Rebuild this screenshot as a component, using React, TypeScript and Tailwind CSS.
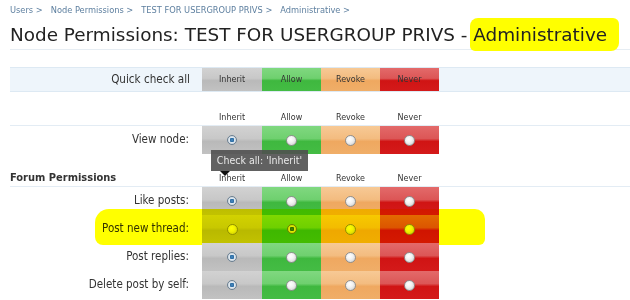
import React from "react";

type Col = "inherit" | "allow" | "revoke" | "never";
const cols: { key: Col; label: string; w: string; bg: string }[] = [
  { key: "inherit", label: "Inherit", w: "w-[60px]", bg: "bg-[linear-gradient(to_bottom,#d2d2d2_0%,#c8c8c8_45%,#b9b9b9_55%,#c2c2c2_100%)]" },
  { key: "allow", label: "Allow", w: "w-[59px]", bg: "bg-[linear-gradient(to_bottom,#80d880_0%,#6fd06f_45%,#3fb83f_55%,#44bc44_100%)]" },
  { key: "revoke", label: "Revoke", w: "w-[59px]", bg: "bg-[linear-gradient(to_bottom,#f7c995_0%,#f3bc80_45%,#efa860_55%,#f0ae68_100%)]" },
  { key: "never", label: "Never", w: "w-[59px]", bg: "bg-[linear-gradient(to_bottom,#e36a6a_0%,#dc5656_45%,#d01414_55%,#d41a1a_100%)]" },
];

function Radio({ on }: { on: boolean }) {
  return on ? (
    <span className="block w-[10px] h-[10px] rounded-full border border-[#6b7f90] bg-[radial-gradient(circle_at_50%_50%,#4a8cc4_0%,#2a6aa0_35%,#dfe8ef_45%,#c0ccd6_100%)]" />
  ) : (
    <span className="block w-[11px] h-[11px] rounded-full border border-[#8f8f8f] bg-[radial-gradient(circle_at_40%_35%,#ffffff_0%,#f2f2f2_40%,#c8c8c8_100%)]" />
  );
}

const cond = "font-['DejaVu_Sans_Condensed','DejaVu_Sans',sans-serif] [font-stretch:condensed]";

function Row({ label, sel, highlight }: { label: string; sel: Col; highlight?: boolean }) {
  return (
    <div className="relative flex h-[28px]">
      <div className={`w-[192px] flex items-center justify-end pr-[13px] text-[11.5px] text-[#333] ${cond}`}>{label}</div>
      {cols.map((c) => (
        <div key={c.key} className={`${c.w} ${c.bg} flex items-center justify-center`}>
          <Radio on={c.key === sel} />
        </div>
      ))}
      {highlight && (
        <div className="absolute left-[85px] top-[-6px] w-[390px] h-[36px] bg-[#ffff00] mix-blend-multiply rounded-tl-[14px] rounded-bl-[8px] rounded-tr-[10px] rounded-br-[6px] pointer-events-none" />
      )}
    </div>
  );
}

function HeaderLabels() {
  return (
    <div className="flex">
      <div className="w-[192px]" />
      {cols.map((c) => (
        <div key={c.key} className={`${c.w} text-center text-[8px] text-[#333]`}>{c.label}</div>
      ))}
    </div>
  );
}

export default function App() {
  return (
    <div className="w-[630px] h-[300px] overflow-hidden bg-white pl-[10px] font-['DejaVu_Sans',sans-serif]">
      <div className={`pt-[2px] h-[17px] flex items-center gap-[8px] text-[9.2px] text-[#5d7f9f] ${cond}`}>
        <span>Users &gt;</span>
        <span>Node Permissions &gt;</span>
        <span>TEST FOR USERGROUP PRIVS &gt;</span>
        <span>Administrative &gt;</span>
      </div>
      <div className="h-[33px] flex items-center pt-[3px] text-[18.4px] text-[#222] border-b border-[#e6edf3]">
        <span>Node Permissions: TEST FOR USERGROUP PRIVS -&nbsp;</span>
        <span className="bg-[#ffff00] rounded-tl-[8px] rounded-bl-[5px] rounded-tr-[6px] rounded-br-[8px] pl-[3px] pr-[12px] py-[3px] -ml-[3px]">Administrative</span>
      </div>
      <div className="mt-[17px] flex h-[25px] bg-[#eef5fb] border-y border-[#dde9f3]">
        <div className={`w-[192px] flex items-center justify-end pr-[12px] text-[11.6px] text-[#333] ${cond}`}>Quick check all</div>
        {cols.map((c) => (
          <div key={c.key} className={`${c.w} ${c.bg} flex items-center justify-center text-[8px] text-[#333]`}>{c.label}</div>
        ))}
      </div>
      <div className="mt-[13px] h-[21px] pt-[7px] border-b border-[#e3ecf4]">
        <HeaderLabels />
      </div>
      <div className="relative">
        <Row label="View node:" sel="inherit" />
        <div className="absolute left-[201px] top-[24px] z-10">
          <div className={`relative bg-[#505050]/90 text-[#e8e8e8] text-[10.5px] w-[97px] justify-center h-[21px] flex items-center whitespace-nowrap ${cond}`}>
            Check all: 'Inherit'
            <span className="absolute left-[9px] top-[21px] w-0 h-0 border-l-[5px] border-r-[5px] border-t-[5px] border-l-transparent border-r-transparent border-t-[#111]" />
          </div>
        </div>
      </div>
      <div className="h-[33px] flex items-end pb-[1px] border-b border-[#e3ecf4]">
        <div className={`w-[192px] text-[11px] leading-[15px] font-bold text-[#333] ${cond}`}>Forum Permissions</div>
        {cols.map((c) => (
          <div key={c.key} className={`${c.w} text-center text-[8px] text-[#333]`}>{c.label}</div>
        ))}
      </div>
      <Row label="Like posts:" sel="inherit" />
      <Row label="Post new thread:" sel="allow" highlight />
      <Row label="Post replies:" sel="inherit" />
      <Row label="Delete post by self:" sel="inherit" />
    </div>
  );
}
